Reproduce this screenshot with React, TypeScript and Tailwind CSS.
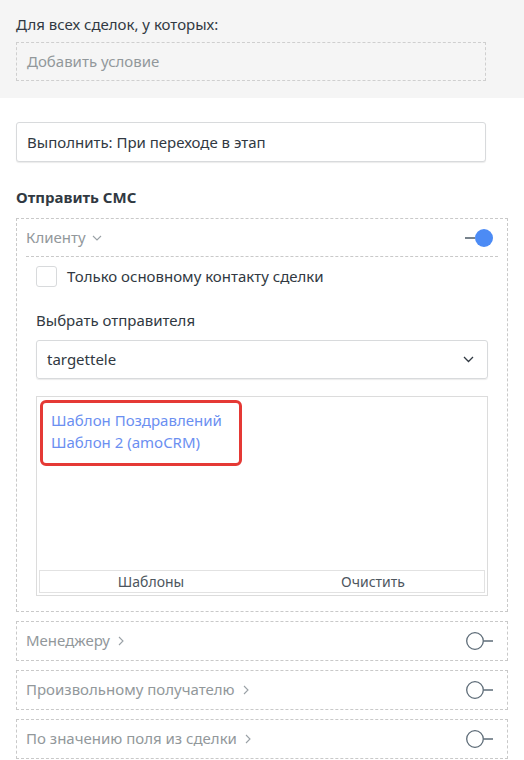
import React from 'react';

const font = { fontFamily: '"Noto Sans", "Open Sans", sans-serif' };

const ToggleOn = () => (
    <svg width="30" height="20" viewBox="0 0 30 20">
        <line x1="0" y1="10" x2="10" y2="10" stroke="#4b5a66" strokeWidth="1.5" />
        <circle cx="19" cy="10" r="9" fill="#4c8bf5" />
    </svg>
);

const ToggleOff = () => (
    <svg width="30" height="20" viewBox="0 0 30 20">
        <circle cx="12" cy="10" r="8.3" fill="none" stroke="#5d6b77" strokeWidth="1.3" />
        <line x1="20.5" y1="10" x2="30" y2="10" stroke="#5d6b77" strokeWidth="1.5" />
    </svg>
);

const Chevron = ({ dir }: { dir: 'down' | 'right' }) => (
    <svg width="10" height="10" viewBox="0 0 10 10" className="ml-1.5">
        {dir === 'down' ? (
            <path d="M1 3 L5 7 L9 3" fill="none" stroke="#9aa1a6" strokeWidth="1.1" />
        ) : (
            <path d="M3 1 L7 5 L3 9" fill="none" stroke="#9aa1a6" strokeWidth="1.1" />
        )}
    </svg>
);

const Recipient = ({ label }: { label: string }) => (
    <div className="flex items-center justify-between h-[40px] border border-dashed border-[#c9c9c9] pl-[9px] pr-[14px]">
        <span className="flex items-center text-[15px] text-[#92989b]">
            {label}
            <Chevron dir="right" />
        </span>
        <ToggleOff />
    </div>
);

const App: React.FC = () => {
    return (
        <div className="w-[524px] h-[760px] bg-white overflow-hidden text-[#313942]" style={font}>
            {/* Conditions */}
            <div className="bg-[#f5f5f5] h-[98px] pt-[14px] pl-[16px] pr-[38px]">
                <div className="text-[15px] leading-[20px]">Для всех сделок, у которых:</div>
                <div className="mt-[8px] h-[39px] border border-dashed border-[#cfcfcf] flex items-center pl-[10px] text-[15px] text-[#92989b]">
                    Добавить условие
                </div>
            </div>

            <div className="px-[16px]">
                {/* Trigger */}
                <div className="mt-[24px] mr-[22px] h-[40px] bg-white border border-[#d8dadc] rounded-[3px] shadow-[0_1px_1px_rgba(0,0,0,0.08)] flex items-center pl-[10px] text-[15px]">
                    Выполнить: При переходе в этап
                </div>

                <div className="mt-[25px] text-[15px] font-bold leading-[20px]">Отправить СМС</div>

                {/* Client block */}
                <div className="mt-[11px] border border-dashed border-[#c9c9c9] pb-[15px]">
                    <div className="mx-[9px] pr-[3px] h-[38px] flex items-center justify-between border-b border-dashed border-[#c9c9c9]">
                        <span className="flex items-center text-[15px] text-[#92989b]">
                            Клиенту
                            <Chevron dir="down" />
                        </span>
                        <ToggleOn />
                    </div>

                    <div className="px-[19px]">
                        <label className="mt-[8px] flex items-center gap-[10px]">
                            <span className="w-[21px] h-[21px] border border-[#d8dadc] rounded-[3px] bg-white" />
                            <span className="text-[15px]">Только основному контакту сделки</span>
                        </label>

                        <div className="mt-[22px] text-[15px] leading-[20px]">Выбрать отправителя</div>

                        <div className="mt-[10px] h-[39px] border border-[#d8dadc] rounded-[3px] shadow-[0_1px_1px_rgba(0,0,0,0.08)] flex items-center justify-between pl-[10px] pr-[13px]">
                            <span className="text-[15px]">targettele</span>
                            <svg width="11" height="7" viewBox="0 0 11 7">
                                <path d="M1 1 L5.5 5.5 L10 1" fill="none" stroke="#313942" strokeWidth="1.3" />
                            </svg>
                        </div>

                        {/* Templates */}
                        <div className="mt-[17px] h-[200px] border border-[#dcdcdc] flex flex-col p-[2px]">
                            <div className="flex-1 pt-[1px] pl-[1px]">
                                <div className="inline-flex flex-col w-[202px] h-[66px] border-[3px] border-[#e53935] rounded-[6px] pl-[8px] pt-[6px] text-[15px] leading-[22px] text-[#6b8ff1]">
                                    <span>Шаблон Поздравлений</span>
                                    <span>Шаблон 2 (amoCRM)</span>
                                </div>
                            </div>
                            <div className="h-[23px] border border-[#e2e2e2] grid grid-cols-2 text-[14px] text-[#4d565e] leading-[21px]">
                                <span className="text-center">Шаблоны</span>
                                <span className="text-center">Очистить</span>
                            </div>
                        </div>
                    </div>
                </div>

                {/* Other recipients */}
                <div className="mt-[9px] flex flex-col gap-[9px]">
                    <Recipient label="Менеджеру" />
                    <Recipient label="Произвольному получателю" />
                    <Recipient label="По значению поля из сделки" />
                </div>
            </div>
        </div>
    );
};

export default App;
